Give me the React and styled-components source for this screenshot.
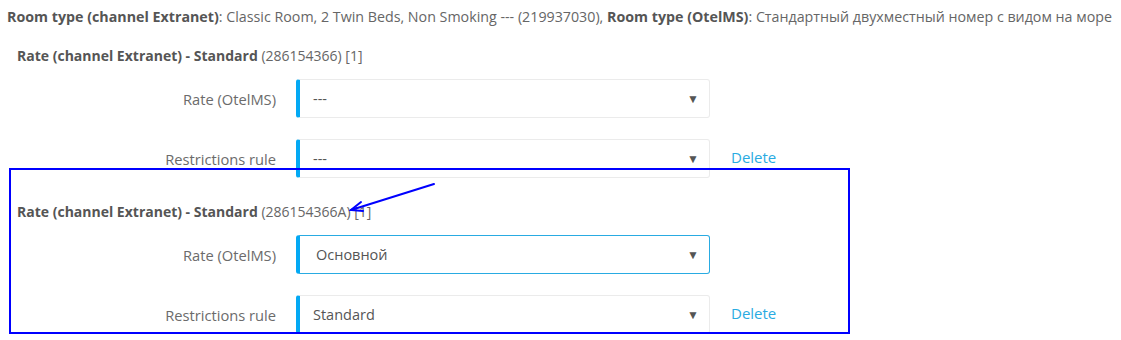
import React from "react";
import styled, { createGlobalStyle } from "styled-components";

const Global = createGlobalStyle`
  html, body { margin: 0; padding: 0; background: #fff; }
  body { font-family: "Open Sans", "Noto Sans", sans-serif; color: #666; }
`;

const Page = styled.div`
  position: relative;
  width: 1121px;
  height: 340px;
  overflow: hidden;
  padding-top: 7px;
  box-sizing: border-box;
`;

const RoomLine = styled.div`
  padding-left: 7px;
  font-size: 14.25px;
  line-height: 20px;
  white-space: nowrap;
  color: #666;
  margin-bottom: 19px;
`;

const B = styled.b`
  font-weight: 700;
  color: #555;
`;

const Section = styled.section`
  padding-left: 17px;
  margin-bottom: 24px;
`;

const Heading = styled.div`
  font-size: 14px;
  line-height: 20px;
  color: #666;
  margin-bottom: 13px;
`;

const Rows = styled.div`
  display: flex;
  flex-direction: column;
  gap: 21px;
`;

const Row = styled.div`
  display: flex;
  align-items: center;
`;

const Label = styled.div`
  width: 259px;
  margin-right: 20px;
  text-align: right;
  font-size: 14.7px;
  color: #6b6b6b;
`;

const SelectBox = styled.div`
  box-sizing: border-box;
  width: 414px;
  height: 39px;
  display: flex;
  align-items: center;
  justify-content: space-between;
  border: 1px solid ${(p) => (p.$focused ? "#29abe2" : "#ebebeb")};
  border-left: 4px solid #03a9f4;
  border-radius: 3px;
  padding: 0 10px 0 ${(p) => (p.$focused ? 16 : 13)}px;
  font-size: 14.5px;
  color: #555;
  background: #fff;
`;

const Caret = styled.span`
  font-size: 12px;
  color: #555;
  line-height: 1;
`;

const DeleteLink = styled.a`
  margin-left: 21px;
  padding-bottom: 4px;
  font-size: 15px;
  color: #29abe2;
  text-decoration: none;
  cursor: pointer;
`;

const Highlight = styled.div`
  position: absolute;
  left: 9px;
  top: 168px;
  width: 841px;
  height: 166px;
  box-sizing: border-box;
  border: 2px solid #0000ff;
  pointer-events: none;
`;

const Arrow = styled.svg`
  position: absolute;
  left: 0;
  top: 0;
  pointer-events: none;
`;

function Select({ value, focused }) {
  return (
    <SelectBox $focused={focused}>
      <span>{value}</span>
      <Caret>▼</Caret>
    </SelectBox>
  );
}

function RateSection({ code, rate, rule }) {
  return (
    <Section>
      <Heading>
        <B>Rate (channel Extranet) - Standard</B> ({code}) [1]
      </Heading>
      <Rows>
        <Row>
          <Label>Rate (OtelMS)</Label>
          <Select value={rate.value} focused={rate.focused} />
        </Row>
        <Row>
          <Label>Restrictions rule</Label>
          <Select value={rule} />
          <DeleteLink>Delete</DeleteLink>
        </Row>
      </Rows>
    </Section>
  );
}

export default function App() {
  return (
    <>
      <Global />
      <Page>
        <RoomLine>
          <B>Room type (channel Extranet)</B>: Classic Room, 2 Twin Beds, Non
          Smoking --- (219937030), <B>Room type (OtelMS)</B>: Стандартный
          двухместный номер с видом на море
        </RoomLine>
        <RateSection code="286154366" rate={{ value: "---" }} rule="---" />
        <RateSection
          code="286154366A"
          rate={{ value: "Основной", focused: true }}
          rule="Standard"
        />
        <Highlight />
        <Arrow width="1121" height="340">
          <g stroke="#0000ff" strokeWidth="2" fill="none" strokeLinecap="round">
            <line x1="434" y1="184" x2="351" y2="210" />
            <polyline points="361,202 351,210 363,211" />
          </g>
        </Arrow>
      </Page>
    </>
  );
}
